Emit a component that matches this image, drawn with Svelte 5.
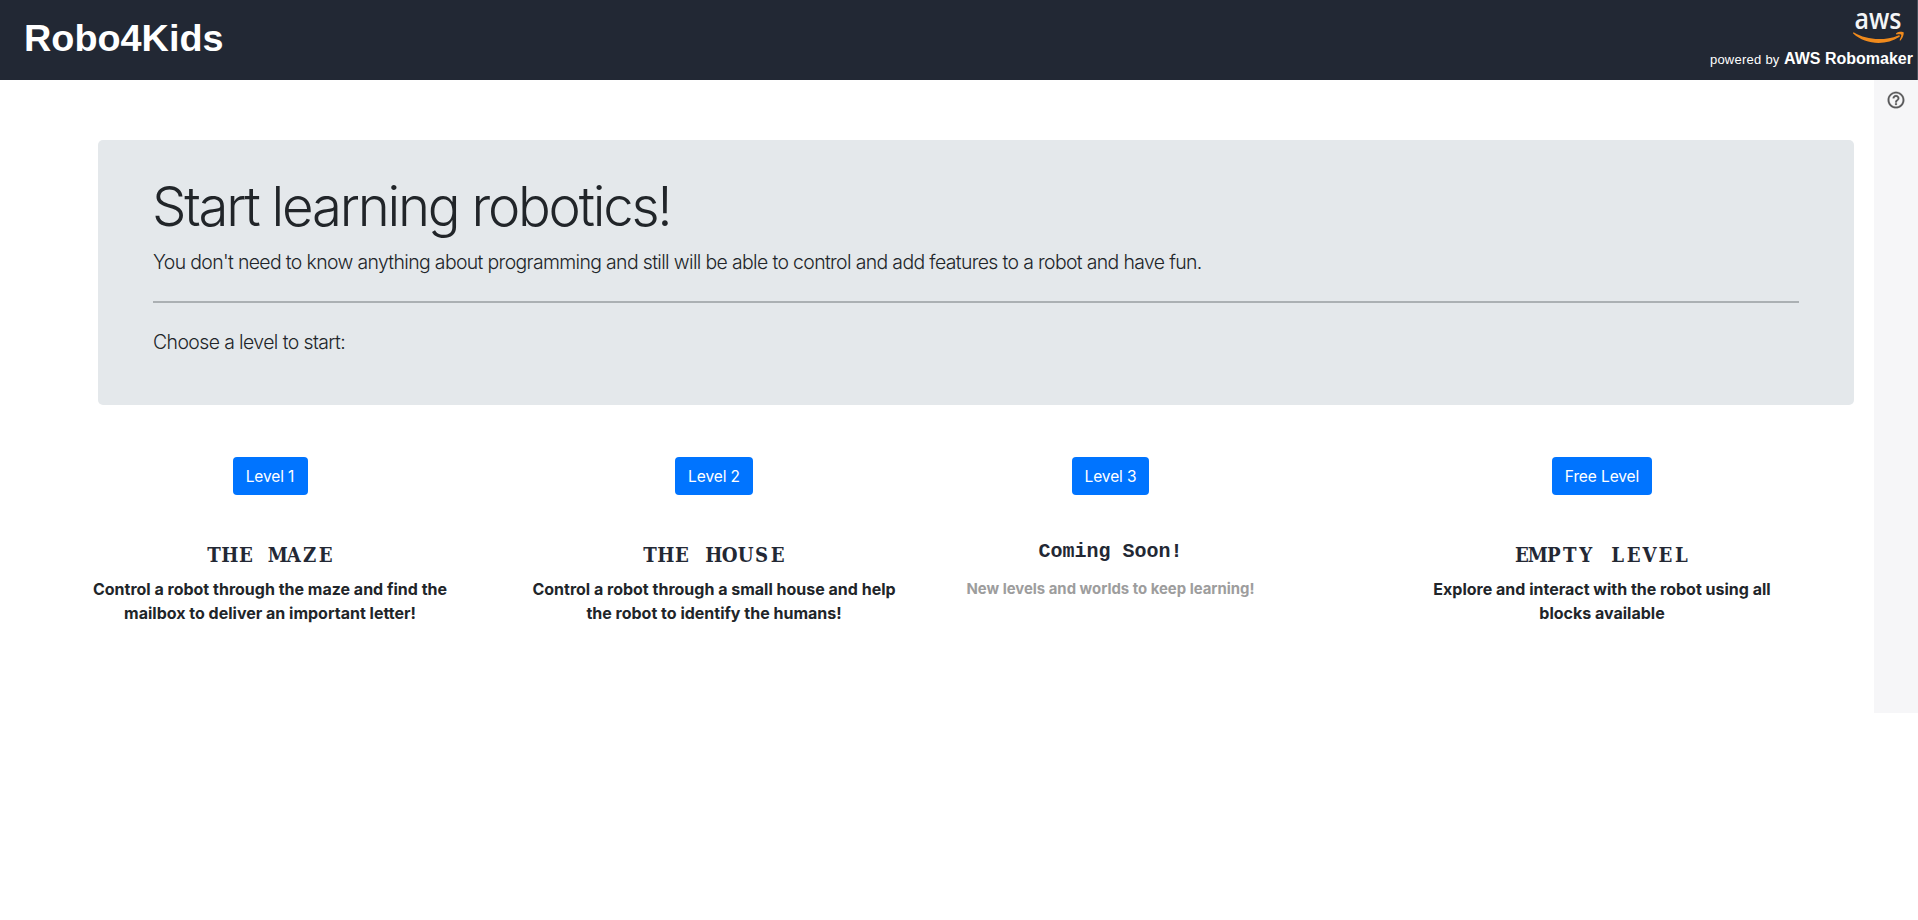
<script>
  const levels = [
    { button: 'Level 1', title: 'THE MAZE', lines: ['Control a robot through the maze and find the', 'mailbox to deliver an important letter!'], width: 75 },
    { button: 'Level 2', title: 'THE HOUSE', lines: ['Control a robot through a small house and help', 'the robot to identify the humans!'], width: 78 },
    { button: 'Level 3', title: 'Coming Soon!', lines: ['New levels and worlds to keep learning!'], width: 77, soon: true },
    { button: 'Free Level', title: 'EMPTY LEVEL', lines: ['Explore and interact with the robot using all', 'blocks available'], width: 100 }
  ];

  const pitch = 15.95;
  const squeeze = 0.89;

  // Centre of every character cell, so that the slab titles stay monospaced
  function cells(title) {
    return [...title].map((_, i) => (((i + 0.5) * pitch) / squeeze).toFixed(2)).join(' ');
  }
</script>

<header>
  <h1>Robo4Kids</h1>
  <div class="brand">
    <svg class="aws" width="54" height="45" viewBox="0 -9 54 45">
      <text x="3.5" y="19.5" textLength="47" lengthAdjust="spacingAndGlyphs">aws</text>
      <path d="M3 23.6C15 31 33 32.3 47.3 26.4C48.8 25.8 49.6 27 48.2 28C35 37 14 35.8 2.2 24.6C1.6 24 2.2 23.2 3 23.6Z" fill="#f08a1c" />
      <path d="M45.2 24.2C47.2 22.6 51.6 22.4 52.5 23.3C53.2 24.4 52 29 49.6 31.4C49 31.8 48.4 31.4 48.7 30.7C49.6 28.7 50.7 26.3 50.2 25.7C49.6 25 47.5 25.1 45.7 25.4C45 25.4 44.7 24.7 45.2 24.2Z" fill="#f08a1c" />
    </svg>
    <p><span>powered by</span> <b>AWS Robomaker</b></p>
  </div>
</header>

<div class="body">
  <main>
    <section class="jumbotron">
      <h2>Start learning robotics!</h2>
      <p class="lead first">You don't need to know anything about programming and still will be able to control and add features to a robot and have fun.</p>
      <hr />
      <p class="lead second">Choose a level to start:</p>
    </section>
    <section class="levels">
      {#each levels as level}
        <article class:soon={level.soon}>
          <button style="width: {level.width}px">{level.button}</button>
          <h4>
            {#if level.soon}
              {level.title}
            {:else}
              <svg width={level.title.length * pitch} height="30">
                <text x={cells(level.title)} y="24" transform="scale({squeeze} 1)">{level.title}</text>
              </svg>
            {/if}
          </h4>
          <p class="desc">
            {#each level.lines as line}<span>{line}</span>{/each}
          </p>
        </article>
      {/each}
    </section>
  </main>
  <aside>
    <svg width="20" height="20" viewBox="0 0 24 24" fill="#58585a">
      <path d="M11 18h2v-2h-2v2zm1-16C6.48 2 2 6.48 2 12s4.48 10 10 10 10-4.48 10-10S17.52 2 12 2zm0 18c-4.41 0-8-3.59-8-8s3.59-8 8-8 8 3.59 8 8-3.59 8-8 8zm0-14c-2.21 0-4 1.79-4 4h2c0-1.1.9-2 2-2s2 .9 2 2c0 2-3 1.750-3 5h2c0-2.250 3-2.500 3-5 0-2.210-1.790-4-4-4z" stroke="#58585a" stroke-width=".3" />
    </svg>
  </aside>
</div>

<style>
  :global(body) {
    background: #fff;
    color: #212529;
    font-family: Inter, sans-serif;
  }
  header {
    box-sizing: border-box;
    height: 80px;
    background: #222834;
    border-right: 1px solid #46505c;
    color: #fff;
    display: flex;
    justify-content: space-between;
    font-family: "Liberation Sans", Arial, sans-serif;
  }
  h1 {
    margin: 0;
    padding: 16px 0 0 24px;
    font-size: 37.8px;
    line-height: 44px;
    font-weight: 700;
  }
  .brand {
    display: flex;
    flex-direction: column;
    align-items: flex-end;
    padding: 0 4px 0 0;
  }
  .aws {
    display: block;
    margin-right: 8px;
    overflow: visible;
  }
  .aws text {
    font: 600 28px "Open Sans", sans-serif;
    fill: #f4f5f6;
  }
  .brand p {
    margin: 4px 0 0;
    line-height: 20px;
    white-space: nowrap;
    font-size: 16px;
  }
  .brand span {
    font-size: 13px;
    letter-spacing: .25px;
  }
  .body {
    display: flex;
    height: 633px;
  }
  main {
    flex: 1;
    padding-top: 60px;
  }
  aside {
    width: 44px;
    background: #f6f6f8;
    display: flex;
    justify-content: center;
    padding-top: 10px;
    box-sizing: border-box;
  }
  .jumbotron {
    box-sizing: border-box;
    height: 265px;
    margin: 0 20px 0 98px;
    padding: 33px 55px 0;
    background: #e4e8eb;
    border-radius: 5px;
  }
  h2 {
    margin: 0 0 0 -1px;
    font-size: 54.5px;
    line-height: 67px;
    font-weight: 300;
    letter-spacing: -2.23px;
    white-space: nowrap;
  }
  .lead {
    margin: 0;
    font-size: 19.4px;
    line-height: 30px;
    font-weight: 300;
    white-space: nowrap;
  }
  .first {
    margin-top: 7px;
    letter-spacing: -.628px;
  }
  .second {
    letter-spacing: -.58px;
  }
  hr {
    height: 2px;
    border: 0;
    background: #abb0b3;
    margin: 24px 0;
  }
  .levels {
    display: grid;
    grid-template-columns: 440px 448px 345px 544px;
    justify-content: start;
    margin: 52px 0 0 50px;
  }
  article {
    display: flex;
    flex-direction: column;
    align-items: center;
  }
  article:last-child {
    margin-left: 47px;
    width: 544px;
  }
  button {
    height: 38px;
    padding: 1px 0 0;
    border: 0;
    border-radius: 4px;
    background: #0074ff;
    color: #fff;
    font: 400 15.5px/37px Inter, sans-serif;
    letter-spacing: -.1px;
  }
  h4 {
    margin: 43px 0 0;
    height: 30px;
    font: 700 20px/27px "Liberation Mono", monospace;
    color: #232834;
  }
  h4 svg {
    display: block;
    overflow: visible;
  }
  h4 text {
    font: 700 20.4px "DejaVu Serif", serif;
    fill: #232834;
    text-anchor: middle;
  }
  .desc {
    margin: 9px 0 0;
    font-size: 16px;
    line-height: 24px;
    font-weight: 650;
    letter-spacing: 0;
  }
  .desc span {
    display: block;
    text-align: center;
    white-space: nowrap;
  }
  .soon .desc {
    font-size: 14.9px;
    color: #9d9d9d;
  }
</style>
